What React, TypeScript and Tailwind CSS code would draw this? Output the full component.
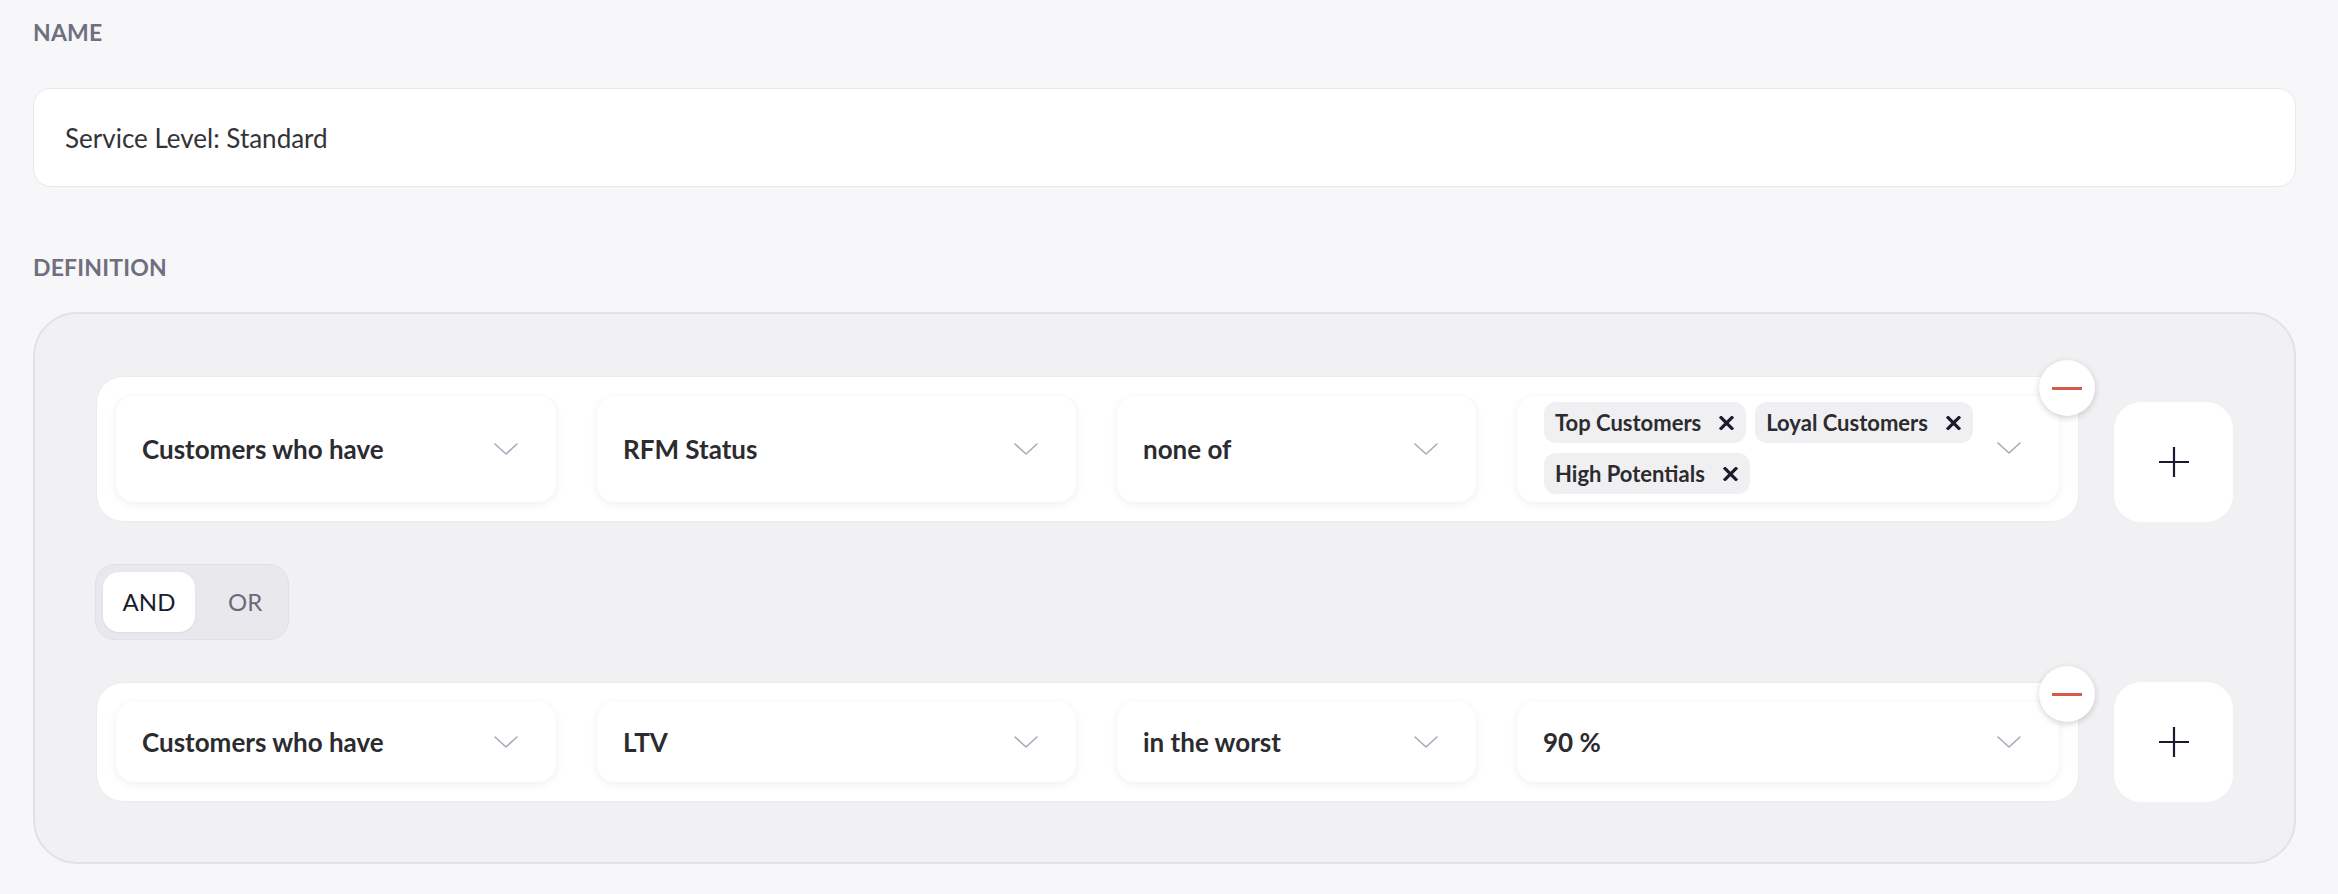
import React from "react";

const Chevron = () => (
  <svg width="24" height="12" viewBox="0 0 24 12" fill="none" className="shrink-0">
    <path d="M1 1 L12 11 L23 1" stroke="#a9a9ba" strokeWidth="1.6" strokeLinecap="round" strokeLinejoin="round" />
  </svg>
);

const XIcon = () => (
  <svg width="15" height="14" viewBox="0 0 15 14" fill="none" className="shrink-0">
    <path d="M1 0.5 L14 13.5 M14 0.5 L1 13.5" stroke="#1b1b2f" strokeWidth="3.2" strokeLinecap="butt" />
  </svg>
);

const PlusIcon = () => (
  <svg width="30" height="30" viewBox="0 0 30 30" fill="none">
    <path d="M15 0 V30 M0 15 H30" stroke="#1b1b2f" strokeWidth="2.2" />
  </svg>
);

const Select = ({ children }: { children: React.ReactNode }) => (
  <div className="flex items-center justify-between rounded-[18px] bg-white pl-[26px] pr-[38px] shadow-[0_2px_8px_rgba(30,30,60,0.07)] min-h-[80px]">
    <span className="text-[26px] font-bold text-[#2b2b30] leading-none">{children}</span>
    <Chevron />
  </div>
);

const Tag = ({ label }: { label: string }) => (
  <div className="flex h-[41px] items-center gap-[18px] rounded-[12px] bg-[#f0f0f3] pl-[11px] pr-[12px]">
    <span className="text-[22px] font-bold text-[#2b2b30] leading-none">{label}</span>
    <XIcon />
  </div>
);

const MinusBtn = () => (
  <div className="absolute -right-[17px] -top-[17px] flex h-[56px] w-[56px] items-center justify-center rounded-full bg-white shadow-[0_2px_6px_rgba(0,0,0,0.18)]">
    <div className="h-[3px] w-[30px] bg-[#d75b4b]" />
  </div>
);

const PlusBtn = () => (
  <div className="flex h-[120px] w-[119px] shrink-0 items-center justify-center rounded-[27px] bg-white">
    <PlusIcon />
  </div>
);

const Row = ({ a, b, c, d }: { a: string; b: string; c: string; d: React.ReactNode }) => (
  <div className="flex items-end gap-[35px]">
    <div className="relative flex-1 rounded-[27px] border border-[#ebebef] bg-white p-[19px]">
      <div className="grid grid-cols-[440px_479px_359px_1fr] gap-[41px]">
        <Select>{a}</Select>
        <Select>{b}</Select>
        <Select>{c}</Select>
        {d}
      </div>
      <MinusBtn />
    </div>
    <PlusBtn />
  </div>
);

export default function App() {
  return (
    <div className="min-h-screen bg-[#f7f7f9] pl-[33px] pr-[42px] pt-[21px] pb-[30px] font-['Lato',sans-serif]">
      <div className="text-[23px] font-bold leading-none tracking-[0.2px] text-[#6f6f80]">NAME</div>
      <div className="mt-[44px] flex h-[99px] items-center rounded-[18px] border-[1.5px] border-[#e8e8ec] bg-white pl-[31px]">
        <span className="text-[26px] text-[#333338] leading-none">Service Level: Standard</span>
      </div>
      <div className="mt-[69px] text-[23px] font-bold leading-none tracking-[0.2px] text-[#6f6f80]">DEFINITION</div>
      <div className="mt-[33px] rounded-[44px] border-2 border-[#e2e2e6] bg-[#f1f1f3] px-[61px] pt-[62px] pb-[60px]">
        <Row
          a="Customers who have"
          b="RFM Status"
          c="none of"
          d={
            <div className="flex items-center justify-between rounded-[18px] bg-white pl-[27px] pr-[38px] py-[6px] pb-[8px] shadow-[0_2px_8px_rgba(30,30,60,0.07)]">
              <div className="flex flex-1 flex-wrap gap-x-[9px] gap-y-[10px] pr-[10px]">
                <Tag label="Top Customers" />
                <Tag label="Loyal Customers" />
                <Tag label="High Potentials" />
              </div>
              <Chevron />
            </div>
          }
        />
        <div className="my-[42px] flex -ml-[1px]">
          <div className="flex items-center gap-[33px] rounded-[20px] border border-[#e0e0e5] bg-[#e9e9ed] p-[7px] pr-[26px]">
            <div className="flex h-[60px] w-[92px] items-center justify-center rounded-[16px] bg-white shadow-[0_1px_3px_rgba(0,0,0,0.06)]">
              <span className="text-[24px] leading-none text-[#1b1b2f]">AND</span>
            </div>
            <span className="text-[24px] leading-none text-[#6b6b78]">OR</span>
          </div>
        </div>
        <Row a="Customers who have" b="LTV" c="in the worst" d={<Select>90 %</Select>} />
      </div>
    </div>
  );
}
